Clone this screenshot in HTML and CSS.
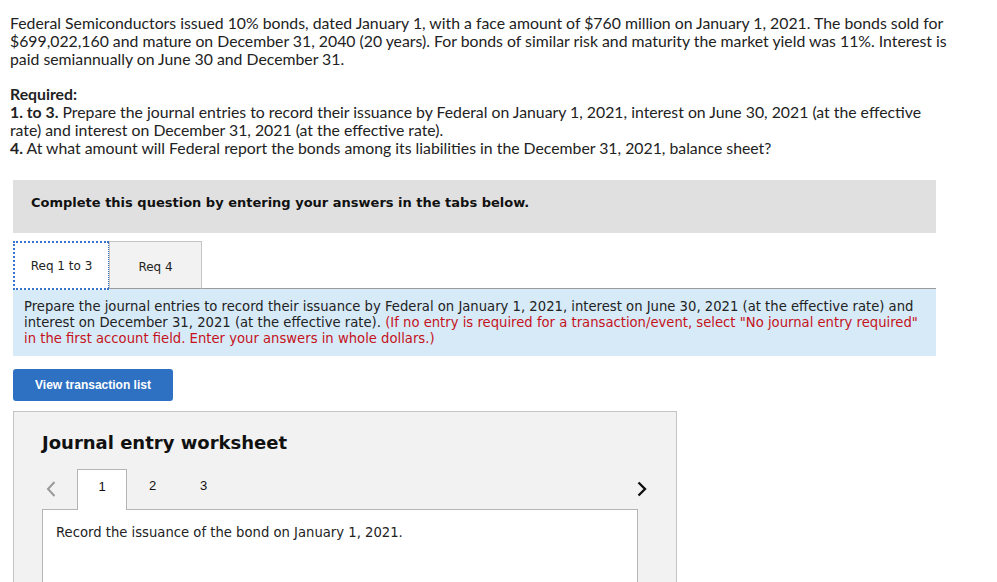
FILE: index.html
```html
<!DOCTYPE html>
<html>
<head>
<meta charset="utf-8">
<link rel="stylesheet" href="styles.css">
</head>
<body>
<div class="problem">
  <p class="intro">Federal Semiconductors issued 10% bonds, dated January 1, with a face amount of $760 million on January 1, 2021. The bonds sold for $699,022,160 and mature on December 31, 2040 (20 years). For bonds of similar risk and maturity the market yield was 11%. Interest is paid semiannually on June 30 and December 31.</p>
  <p class="req"><b>Required:</b><br><b>1. to 3.</b> Prepare the journal entries to record their issuance by Federal on January 1, 2021, interest on June 30, 2021 (at the effective rate) and interest on December 31, 2021 (at the effective rate).<br><b>4.</b> At what amount will Federal report the bonds among its liabilities in the December 31, 2021, balance sheet?</p>
</div>
<div class="main">
  <div class="complete">Complete this question by entering your answers in the tabs below.</div>
  <div class="tabs">
    <div class="tab active">Req 1 to 3</div>
    <div class="tab">Req 4</div>
    <div class="tabfill"></div>
  </div>
  <div class="info">Prepare the journal entries to record their issuance by Federal on January 1, 2021, interest on June 30, 2021 (at the effective rate) and interest on December 31, 2021 (at the effective rate). <span class="red">(If no entry is required for a transaction/event, select "No journal entry required" in the first account field. Enter your answers in whole dollars.)</span></div>
  <button class="btn">View transaction list</button>
  <div class="ws">
    <h2 class="ws-title">Journal entry worksheet</h2>
    <div class="ws-nav">
      <span class="arrow left"><svg width="10" height="16" viewBox="0 0 10 16"><path d="M8.5 1 L2 8 L8.5 15" fill="none" stroke="#9a9a9a" stroke-width="2"/></svg></span>
      <div class="num active">1</div>
      <div class="num">2</div>
      <div class="num">3</div>
      <div class="navfill"></div>
      <span class="arrow right"><svg width="10" height="16" viewBox="0 0 10 16"><path d="M1.5 1.5 L8 8 L1.5 14.5" fill="none" stroke="#111" stroke-width="2.4"/></svg></span>
    </div>
    <div class="ws-body">Record the issuance of the bond on January 1, 2021.</div>
  </div>
</div>
</body>
</html>
```
FILE: styles.css
```css
html, body { margin: 0; padding: 0; background: #fff; }
body { overflow: hidden; height: 582px; }
.problem {
  padding: 14px 0 0 10px;
  width: 940px;
  font-family: "Lato", "Open Sans", sans-serif;
  font-size: 15.8px;
  line-height: 18px;
  color: #222;
}
.problem p { margin: 0; }
.problem .intro { margin-bottom: 17px; }
.problem b { font-weight: 700; }
.main { padding: 23px 0 0 13px; width: 923px; }
.complete {
  background: #e0e0e0;
  height: 53px;
  box-sizing: border-box;
  padding: 15px 18px 0;
  font-family: "DejaVu Sans", Verdana, sans-serif;
  font-weight: bold;
  font-size: 13px;
  color: #111;
}
.tabs { display: flex; margin-top: 8px; height: 48px; }
.tab {
  width: 95px;
  box-sizing: border-box;
  border: 1px solid #c4c4c4;
  border-bottom: none;
  background: #f2f2f2;
  font-family: "DejaVu Sans", Verdana, sans-serif;
  font-size: 12px;
  color: #222;
  padding-top: 18px;
  text-align: center;
}
.tab.active {
  width: 96px;
  background: #fff;
  border: 1px dotted #3a74c8;
  border-width: 2px 1px 2px 2px;
  padding-top: 16px;
  height: 49px;
}
.tab.active + .tab { width: 93px; border-bottom: 1px solid #9a9a9a; }
.tabfill { flex: 1; border-bottom: 1px solid #9a9a9a; }
.info {
  background: #d7eaf8;
  padding: 10px 11px 7px;
  font-family: "DejaVu Sans", Verdana, sans-serif;
  font-size: 13.2px;
  line-height: 16px;
  color: #222;
  height: 50px;
}
.red { color: #c5121b; }
.btn {
  display: block;
  margin-top: 13px;
  width: 160px;
  height: 32px;
  border: none;
  border-radius: 3px;
  background: #2e70c2;
  color: #fff;
  font-family: "Liberation Sans", Arial, sans-serif;
  font-weight: bold;
  font-size: 12px;
  padding: 0;
}
.ws {
  margin-top: 10px;
  width: 664px;
  box-sizing: border-box;
  background: #f2f2f2;
  border: 1px solid #c4c4c4;
  border-bottom: none;
  padding: 0 38px 0 28px;
  height: 200px;
}
.ws-title {
  margin: 20px 0 0;
  font-family: "DejaVu Sans", Verdana, sans-serif;
  font-weight: bold;
  font-size: 18px;
  line-height: 22px;
  color: #111;
}
.ws-nav { display: flex; align-items: stretch; height: 40px; margin-top: 15px; }
.arrow { display: flex; align-items: center; }
.arrow.left { width: 35px; padding-left: 4px; box-sizing: border-box; }
.num {
  width: 51px;
  box-sizing: border-box;
  text-align: center;
  font-family: "Liberation Sans", Arial, sans-serif;
  font-size: 13px;
  color: #111;
  padding-top: 9px;
}
.num.active { width: 50px; background: #fff; border: 1px solid #b5b5b5; border-bottom: none; height: 41px; position: relative; z-index: 1; }
.navfill { flex: 1; }
.arrow.right { width: 10px; margin-right: -9px; }
.ws-body {
  background: #fff;
  border: 1px solid #b5b5b5;
  border-bottom: none;
  height: 120px;
  box-sizing: border-box;
  padding: 15px 13px;
  font-family: "DejaVu Sans", Verdana, sans-serif;
  font-size: 13.2px;
  color: #222;
}
```
